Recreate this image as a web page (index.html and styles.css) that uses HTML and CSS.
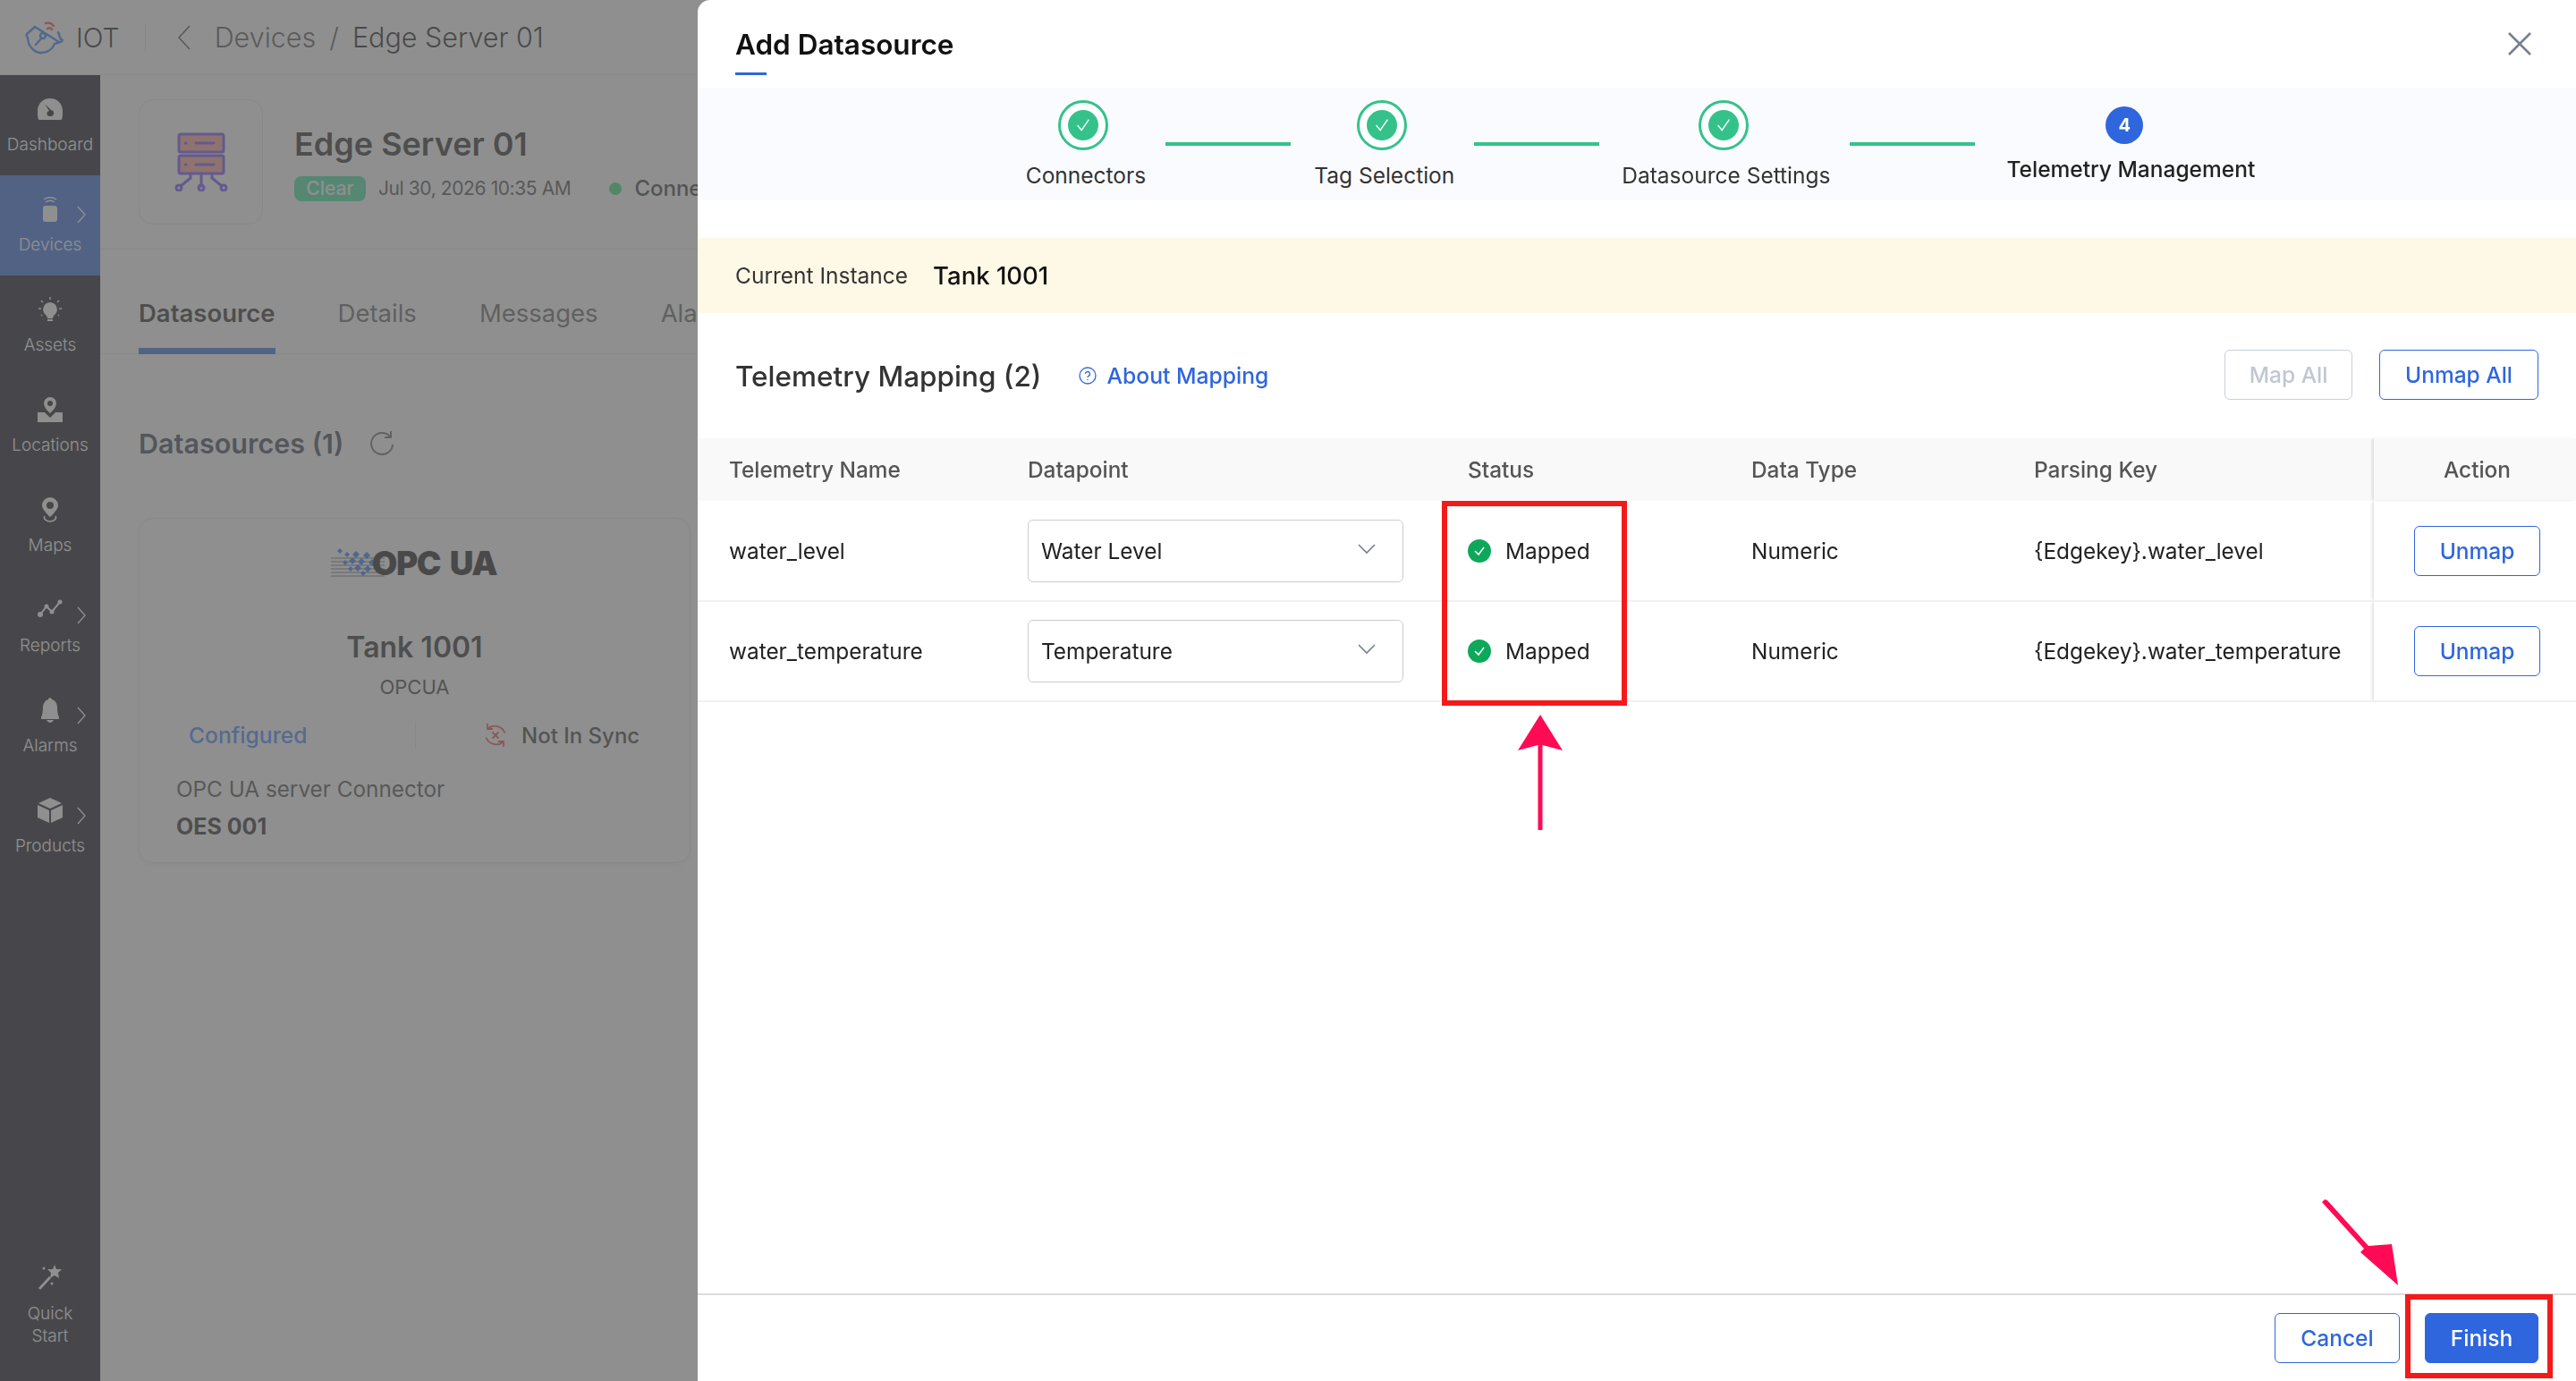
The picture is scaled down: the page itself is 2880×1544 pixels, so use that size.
FILE: index.html
```html
<!DOCTYPE html>
<html lang="en">
<head>
  <meta charset="UTF-8">
  <title>Add Datasource - IOT</title>
  <link rel="stylesheet" href="styles.css">
</head>
<body>

  <header class="topbar">
    <svg class="logo" viewBox="0 0 44 38" fill="none" stroke-width="2.4" stroke-linecap="round">
      <path d="M23 3c4-1 7 0 9 3M25 9c2-1 4-1 5 1" stroke="#ff4040"/>
      <path d="M11 7 2 15c-1 2 0 3 1 4 0 9 7 17 15 17 8 0 13-5 15-10l7-2c2-1 2-3 0-3l-3-8M11 7l27 17M18 20l-6 7" stroke="#2a7ff5"/>
      <circle cx="20" cy="17" r="3" stroke="#2a7ff5"/>
    </svg>
    <span class="brand">IOT</span>
    <span class="topbar-sep"></span>
    <svg class="back" viewBox="0 0 14 28" fill="none" stroke="#444" stroke-width="1.6"><path d="M13 1 1 14l12 13"/></svg>
    <span class="crumb">Devices</span>
    <span class="crumb slash">/</span>
    <span class="crumb current">Edge Server 01</span>
  </header>

  <div class="layout">
    <nav class="sidebar">
      <div class="nav-item">
        <svg viewBox="0 0 28 24" fill="currentColor"><path d="M14 0C6 0 0 6 0 14c0 4 0 10 2 10h24c2 0 2-6 2-10C28 6 22 0 14 0Zm0 20a3 3 0 0 1-1-6L8 6l7 7a3 3 0 0 1-1 7Z"/></svg>
        <span>Dashboard</span>
      </div>
      <div class="nav-item active">
        <svg viewBox="0 0 28 28" fill="currentColor"><rect x="6" y="10" width="16" height="18" rx="3"/><path d="M9 6c3-2 7-2 10 0M7 3c4-3 10-3 14 0" fill="none" stroke="currentColor" stroke-width="1.5"/></svg>
        <span>Devices</span>
        <svg class="nav-arrow" viewBox="0 0 10 20" fill="none" stroke="currentColor" stroke-width="1.3"><path d="m1 1 8 9-8 9"/></svg>
      </div>
      <div class="nav-item">
        <svg viewBox="0 0 28 28" fill="currentColor"><path d="M14 6a8 8 0 0 0-5 14c1 1 2 2 2 4h6c0-2 1-3 2-4a8 8 0 0 0-5-14Z"/><rect x="11" y="25" width="6" height="2"/><path d="M14 0v3M4 4l2 2M24 4l-2 2M1 13h3M24 13h3M4 21l1-1M24 21l-1-1" fill="none" stroke="currentColor" stroke-width="1.5"/></svg>
        <span>Assets</span>
      </div>
      <div class="nav-item">
        <svg viewBox="0 0 28 28" fill="currentColor"><path d="M14 0a7 7 0 0 0-7 7c0 5 7 11 7 11s7-6 7-11a7 7 0 0 0-7-7Zm0 10a3 3 0 1 1 0-6 3 3 0 0 1 0 6Z"/><path d="M0 17v11h28V17l-8 0-6 6-6-6Z"/></svg>
        <span>Locations</span>
      </div>
      <div class="nav-item">
        <svg viewBox="0 0 28 28" fill="currentColor"><path d="M14 0a9 9 0 0 0-9 9c0 5 9 13 9 13s9-8 9-13a9 9 0 0 0-9-9Zm0 13a4 4 0 1 1 0-8 4 4 0 0 1 0 8Z"/><path d="M8 21c-2 3 2 6 6 6s8-3 6-6" fill="none" stroke="currentColor" stroke-width="1.6"/></svg>
        <span>Maps</span>
      </div>
      <div class="nav-item">
        <svg viewBox="0 0 28 28" fill="none" stroke="currentColor" stroke-width="2"><path d="m3 19 7-9 6 6 9-11"/><g fill="currentColor" stroke="none"><circle cx="3" cy="19" r="3"/><circle cx="10" cy="10" r="2.5"/><circle cx="16" cy="16" r="2.5"/><circle cx="25" cy="5" r="2.5"/></g></svg>
        <span>Reports</span>
        <svg class="nav-arrow" viewBox="0 0 10 20" fill="none" stroke="currentColor" stroke-width="1.3"><path d="m1 1 8 9-8 9"/></svg>
      </div>
      <div class="nav-item">
        <svg viewBox="0 0 28 28" fill="currentColor"><path d="M14 0c-1 0-2 1-2 2-4 1-6 5-6 9 0 5-1 9-2 11v2h20v-2c-1-2-2-6-2-11 0-4-2-8-6-9 0-1-1-2-2-2ZM10 25c1 2 3 3 4 3s3-1 4-3Z"/></svg>
        <span>Alarms</span>
        <svg class="nav-arrow" viewBox="0 0 10 20" fill="none" stroke="currentColor" stroke-width="1.3"><path d="m1 1 8 9-8 9"/></svg>
      </div>
      <div class="nav-item">
        <svg viewBox="0 0 28 28" fill="currentColor"><path d="M14 0 1 6l13 6 13-6ZM0 8v14l13 6V14ZM28 8v14l-13 6V14Z"/></svg>
        <span>Products</span>
        <svg class="nav-arrow" viewBox="0 0 10 20" fill="none" stroke="currentColor" stroke-width="1.3"><path d="m1 1 8 9-8 9"/></svg>
      </div>
      <div class="nav-item quick">
        <svg viewBox="0 0 28 28" fill="currentColor"><path d="m19 0 2 5 6 0-4 4 1 6-5-3-5 3 1-6-4-4 6 0Z"/><path d="M13 13 1 26l2 2 12-13Z"/><circle cx="7" cy="4" r="1.5"/><circle cx="16" cy="21" r="1.5"/></svg>
        <span>Quick<br>Start</span>
      </div>
    </nav>

    <main class="content">
      <section class="device-head">
        <div class="device-icon">
          <svg viewBox="0 0 60 66" fill="none" stroke="#6b48ff" stroke-width="3" stroke-linecap="round">
            <rect x="5" y="2" width="50" height="20" rx="2" fill="#ffa090"/>
            <rect x="5" y="26" width="50" height="20" rx="2" fill="#ffa090"/>
            <path d="M12 12h1M24 12h20M12 36h1M24 36h20M30 46v14M18 46v5l-11 9M42 46v5l11 9"/>
            <circle cx="5" cy="62" r="3"/><circle cx="30" cy="62" r="3"/><circle cx="55" cy="62" r="3"/>
          </svg>
        </div>
        <div>
          <h1 class="device-name">Edge Server 01</h1>
          <div class="device-meta">
            <span class="badge-clear">Clear</span>
            <span class="device-date">Jul 30, 2026 10:35 AM</span>
            <span class="dot"></span>
            <span class="device-conn">Connected</span>
          </div>
        </div>
      </section>

      <div class="tabs">
        <span class="tab active">Datasource</span>
        <span class="tab">Details</span>
        <span class="tab">Messages</span>
        <span class="tab">Alarms</span>
      </div>

      <div class="ds-head">
        <h2>Datasources (1)</h2>
        <svg viewBox="0 0 28 28" fill="none" stroke="#5d6470" stroke-width="2"><path d="M23 7a12 12 0 1 0 3 9"/><path d="M24 1v7h-7"/></svg>
      </div>

      <div class="ds-card">
        <div class="opc-logo">
          <svg viewBox="0 0 70 32" fill="#1f78ff">
            <g stroke="#666" stroke-width="1"><path d="M0 11h60M0 15h60M0 19h60M0 23h60M0 27h60M0 31h60"/></g>
            <path d="m10 0 3 3-3 3-3-3ZM18 4l3 3-3 3-3-3ZM28 3l4 4-4 4-4-4ZM40 4l4 4-4 4-4-4ZM24 10l4 4-4 4-4-4ZM34 11l4 4-4 4-4-4ZM46 12l4 4-4 4-4-4ZM16 13l3 3-3 3-3-3ZM30 18l4 4-4 4-4-4ZM41 19l4 4-4 4-4-4ZM22 20l3 3-3 3-3-3ZM36 25l3 3-3 3-3-3Z"/>
          </svg>
          <span>OPC UA</span>
        </div>
        <div class="ds-title">Tank 1001</div>
        <div class="ds-type">OPCUA</div>
        <div class="ds-status">
          <span class="configured">Configured</span>
          <span class="sync">
            <svg viewBox="0 0 28 28" fill="none" stroke="#f04040" stroke-width="1.8"><path d="M5.500 6.500a12 12 0 0 1 19 5M22.500 21.500a12 12 0 0 1-19-5M5 1v6h6M23 27v-6h-6M10.500 10.500l7 7M17.500 10.500l-7 7"/></svg>
            Not In Sync
          </span>
        </div>
        <div class="ds-conn">OPC UA server Connector</div>
        <div class="ds-code">OES 001</div>
      </div>
    </main>
  </div>

  <div class="backdrop"></div>

  <aside class="panel">
    <div class="panel-head">
      <div class="panel-title">Add Datasource</div>
      <svg class="close" viewBox="0 0 26 26" fill="none" stroke="#76808f" stroke-width="2.6"><path d="m1 1 24 24M25 1 1 25"/></svg>
    </div>

    <div class="stepper">
      <div class="step first">
        <span class="ring"><svg viewBox="0 0 24 24" fill="none" stroke="#fff" stroke-width="1.5"><path d="m5 12 5 6 9-13"/></svg></span>
        <span class="step-label">Connectors</span>
      </div>
      <span class="step-line"></span>
      <div class="step">
        <span class="ring"><svg viewBox="0 0 24 24" fill="none" stroke="#fff" stroke-width="1.5"><path d="m5 12 5 6 9-13"/></svg></span>
        <span class="step-label">Tag Selection</span>
      </div>
      <span class="step-line second"></span>
      <div class="step">
        <span class="ring"><svg viewBox="0 0 24 24" fill="none" stroke="#fff" stroke-width="1.5"><path d="m5 12 5 6 9-13"/></svg></span>
        <span class="step-label">Datasource Settings</span>
      </div>
      <span class="step-line last"></span>
      <div class="step current">
        <span class="num">4</span>
        <span class="step-label">Telemetry Management</span>
      </div>
    </div>

    <div class="instance">
      <span class="instance-label">Current Instance</span>
      <span class="instance-name">Tank 1001</span>
    </div>

    <div class="map-head">
      <h2>Telemetry Mapping (2)</h2>
      <a class="about">
        <svg viewBox="0 0 20 20" fill="none" stroke="#2f66dd" stroke-width="1.3"><circle cx="10" cy="10" r="9"/><path d="M7.500 8a2.500 2.500 0 1 1 3.500 2.300c-.8.4-1 1-1 1.700M10 14v1.200"/></svg>
        About Mapping
      </a>
      <div class="map-actions">
        <button class="btn disabled">Map All</button>
        <button class="btn">Unmap All</button>
      </div>
    </div>

    <table class="map-table">
      <colgroup>
        <col class="c-name"><col class="c-point"><col class="c-status"><col class="c-type"><col class="c-key"><col class="c-action">
      </colgroup>
      <thead>
        <tr><th>Telemetry Name</th><th>Datapoint</th><th>Status</th><th>Data Type</th><th>Parsing Key</th><th class="action">Action</th></tr>
      </thead>
      <tbody>
        <tr>
          <td>water_level</td>
          <td><div class="select">Water Level<svg viewBox="0 0 20 12" fill="none" stroke="#76808f" stroke-width="1.6"><path d="m1 1 9 9 9-9"/></svg></div></td>
          <td><span class="mapped"><svg viewBox="0 0 26 26"><circle cx="13" cy="13" r="13" fill="#0da85a"/><path d="m8 13 4 4 6-8" fill="none" stroke="#fff" stroke-width="1.6"/></svg>Mapped</span></td>
          <td>Numeric</td>
          <td>{Edgekey}.water_level</td>
          <td class="action"><button class="btn">Unmap</button></td>
        </tr>
        <tr>
          <td>water_temperature</td>
          <td><div class="select">Temperature<svg viewBox="0 0 20 12" fill="none" stroke="#76808f" stroke-width="1.6"><path d="m1 1 9 9 9-9"/></svg></div></td>
          <td><span class="mapped"><svg viewBox="0 0 26 26"><circle cx="13" cy="13" r="13" fill="#0da85a"/><path d="m8 13 4 4 6-8" fill="none" stroke="#fff" stroke-width="1.6"/></svg>Mapped</span></td>
          <td>Numeric</td>
          <td>{Edgekey}.water_temperature</td>
          <td class="action"><button class="btn">Unmap</button></td>
        </tr>
      </tbody>
    </table>

    <div class="panel-foot">
      <button class="btn">Cancel</button>
      <button class="btn primary">Finish</button>
    </div>

    <!-- review markup drawn on top of the screenshot -->
    <div class="mark mark-status"></div>
    <div class="mark mark-finish"></div>
    <svg class="arrow arrow-up" viewBox="0 0 50 130" fill="#ff0a54"><path d="M25 0 50 40 27.500 34V129H22.500V34L0 40Z"/></svg>
    <svg class="arrow arrow-diag" viewBox="0 0 90 100" fill="#ff0a54" stroke="none"><path d="M3 0 0 3 47 55 43 59 85 96 78 50 52 52 6 1Z"/></svg>
  </aside>

</body>
</html>
```

FILE: styles.css
```css
* { box-sizing: border-box; }
html, body {
  height: 100%;
}
body {
  margin: 0;
  overflow: hidden;
  background: #fff;
  color: #111;
  font-family: Inter, 'Noto Sans', sans-serif;
  display: flex;
  flex-direction: column;
}
h1, h2 { margin: 0; }
button { font-family: inherit; }

/* top bar */
.topbar {
  height: 84px;
  flex: none;
  display: flex;
  align-items: center;
  padding-left: 28px;
  border-bottom: 1px solid #e8e8e8;
}
.logo { width: 44px; height: 38px; }
.brand { font-size: 30px; font-weight: 300; margin-left: 13px; color: #111; }
.topbar-sep {
  width: 1px;
  height: 30px;
  background: #ddd;
  margin: 0 36px 0 28px;
}
.back { width: 14px; height: 28px; margin-right: 27px; }
.crumb { font-size: 30.500px; font-weight: 300; color: #4d4d4d; }
.crumb.slash { margin: 0 15px; }
.crumb.current { color: #111; }

/* sidebar */
.layout {
  flex: 1;
  display: flex;
  min-height: 0;
}
.sidebar {
  width: 112px;
  flex: none;
  background: #070a15;
  color: #fff;
  display: flex;
  flex-direction: column;
}
.nav-item {
  position: relative;
  height: 112px;
  flex: none;
  display: flex;
  flex-direction: column;
  align-items: center;
  padding-top: 24px;
  font-size: 19px;
  font-weight: 300;
  text-align: center;
}
.nav-item svg:first-child {
  width: 28px;
  height: 28px;
  margin-bottom: 14px;
}
.nav-item.active { background: #2f66dd; }
.nav-arrow {
  position: absolute;
  left: 86px;
  top: 34px;
  width: 10px;
  height: 20px;
}
.nav-item.quick {
  margin-top: auto;
  height: 130px;
  line-height: 25px;
  padding-top: 0;
}

/* device page behind the panel */
.content {
  flex: 1;
  min-width: 0;
  padding: 0 0 0 43px;
  overflow: hidden;
}
.device-head {
  display: flex;
  align-items: center;
  gap: 35px;
  height: 195px;
  margin-left: -43px;
  padding-left: 43px;
  border-bottom: 1px solid #e8e8e8;
}
.device-icon {
  width: 139px;
  height: 140px;
  border: 1px solid #e4e6ea;
  border-radius: 16px;
  display: flex;
  align-items: center;
  justify-content: center;
}
.device-icon svg { width: 60px; height: 66px; }
.device-name { font-size: 36px; font-weight: 600; color: #222; padding-top: 2px; }
.device-meta {
  display: flex;
  align-items: center;
  margin-top: 13px;
  font-size: 21px;
  white-space: nowrap;
}
.badge-clear {
  background: #37e39f;
  color: #fff;
  width: 80px;
  height: 28px;
  border-radius: 8px;
  text-align: center;
  line-height: 28px;
  font-weight: 500;
}
.device-date { margin-left: 14px; color: #444; letter-spacing: -.4px; }
.dot {
  width: 14px;
  height: 14px;
  border-radius: 50%;
  background: #2fe07a;
  margin: 0 14px 0 43px;
}
.device-conn { font-size: 24px; font-weight: 500; color: #333; }
.tabs {
  display: flex;
  gap: 70px;
  height: 117px;
  margin-left: -43px;
  padding-left: 43px;
  border-bottom: 1px solid #e8e8e8;
  white-space: nowrap;
}
.tab {
  font-size: 27.500px;
  color: #5d5d5d;
  padding-top: 54px;
}
.tab.active {
  color: #222;
  font-weight: 600;
  border-bottom: 7px solid #2f66dd;
  height: 117px;
}
.ds-head {
  display: flex;
  align-items: center;
  gap: 29px;
  margin-top: 79px;
  height: 40px;
}
.ds-head h2 { font-size: 30.500px; font-weight: 600; color: #333c4c; }
.ds-head svg { width: 28px; height: 28px; }
.ds-card {
  width: 617px;
  height: 386px;
  margin-top: 64px;
  border: 1px solid #e4e6ea;
  border-radius: 16px;
  box-shadow: 0 2px 6px rgba(0,0,0,.06);
  padding: 33px 42px 0;
}
.opc-logo {
  display: flex;
  align-items: center;
  justify-content: center;
  height: 32px;
  margin-left: -2px;
}
.opc-logo svg { width: 70px; height: 32px; margin-right: -24px; }
.opc-logo span {
  font-size: 37px;
  font-weight: 900;
  letter-spacing: -1.500px;
  word-spacing: 5px;
  color: #111;
}
.ds-title { text-align: center; font-size: 32px; font-weight: 600; color: #222; margin-top: 59px; }
.ds-type { text-align: center; font-size: 22px; color: #333; margin-top: 12px; }
.ds-status {
  display: flex;
  margin: 26px 0 0;
  font-size: 24.700px;
  height: 30px;
  align-items: center;
  white-space: nowrap;
}
.configured {
  width: 266px;
  padding-left: 13px;
  color: #3b80ff;
  font-weight: 500;
}
.sync {
  display: flex;
  align-items: center;
  gap: 15px;
  padding-left: 75px;
  border-left: 1px solid #e4e6ea;
  height: 30px;
  color: #333;
  font-size: 24px;
  font-weight: 500;
}
.sync svg { width: 28px; height: 28px; }
.ds-conn { font-size: 24.300px; color: #444; margin-top: 30px; margin-left: -1px; }
.ds-code { font-size: 25px; font-weight: 700; color: #222; margin-top: 12px; margin-left: -1px; }

.backdrop {
  position: fixed;
  inset: 0;
  background: rgba(97,97,97,.71);
}

/* panel */
.panel {
  position: fixed;
  top: 0;
  right: 0;
  bottom: 0;
  width: 2100px;
  background: #fff;
  border-radius: 14px 0 0 0;
  display: flex;
  flex-direction: column;
  color: #222;
}
.panel-head {
  height: 98px;
  flex: none;
  padding: 0 50px 0 42px;
  display: flex;
  align-items: flex-start;
  justify-content: space-between;
}
.panel-title {
  font-size: 31.500px;
  font-weight: 600;
  color: #111;
  padding-top: 30px;
  height: 84px;
  position: relative;
}
.panel-title::after {
  content: "";
  position: absolute;
  left: 0;
  bottom: 0;
  width: 35px;
  height: 3px;
  background: #2f66dd;
}
.close { width: 26px; height: 26px; margin-top: 36px; }

.stepper {
  height: 126px;
  flex: none;
  background: #fafbfe;
  display: flex;
  justify-content: center;
  padding-top: 14px;
  padding-left: 8px;
}
.step {
  display: flex;
  flex-direction: column;
  align-items: center;
}
.ring {
  width: 56px;
  height: 56px;
  border-radius: 50%;
  border: 3px solid #34c28a;
  background: #fff;
  margin-right: 6px;
  display: flex;
  align-items: center;
  justify-content: center;
  flex: none;
}
.ring svg {
  width: 34px;
  height: 34px;
  padding: 6px;
  border-radius: 50%;
  background: #34c28a;
}
.num {
  width: 42px;
  height: 42px;
  margin: 7px 14px 0 0;
  border-radius: 50%;
  background: #2f66dd;
  color: #fff;
  font-size: 20px;
  font-weight: 700;
  line-height: 42px;
  text-align: center;
  flex: none;
}
.step-label {
  font-size: 24.500px;
  color: #333;
  margin-top: 13px;
  white-space: nowrap;
}
.step.current .step-label {
  font-weight: 500;
  color: #222;
}
.step-line {
  width: 140px;
  height: 4px;
  background: #34c28a;
  margin: 47px 26px 0 22px;
}
.step-line.second { margin-right: 25px; }
.step-line.last { margin-right: 35px; }

.instance {
  height: 84px;
  flex: none;
  margin-top: 42px;
  background: #fef8e6;
  padding-left: 42px;
  display: flex;
  align-items: center;
  gap: 28px;
}
.instance-label { font-size: 24.500px; color: #333; }
.instance-name { font-size: 27.500px; font-weight: 500; color: #111; }

.map-head {
  height: 140px;
  flex: none;
  display: flex;
  align-items: center;
  padding: 0 42px;
}
.map-head h2 { font-size: 31.500px; font-weight: 500; color: #333; }
.about {
  display: flex;
  align-items: center;
  gap: 11px;
  margin-left: 42px;
  font-size: 24.700px;
  font-weight: 500;
  color: #2f66dd;
}
.about svg { width: 20px; height: 20px; }
.map-actions {
  margin-left: auto;
  display: flex;
  gap: 30px;
  margin-top: -2px;
}
.btn {
  height: 56px;
  padding: 0 28px;
  border: 1px solid #2f66dd;
  border-radius: 6px;
  background: #fff;
  color: #2f66dd;
  font-size: 24.500px;
  font-weight: 500;
}
.btn.disabled {
  width: 143px;
  padding: 0;
  border-color: #c9d0da;
  color: #c0c7d2;
}
.btn.primary {
  background: #2f66dd;
  color: #fff;
  width: 127px;
  padding: 0;
}

.map-table {
  width: 2100px;
  table-layout: fixed;
  border-collapse: collapse;
  font-size: 24.400px;
  flex: none;
}
.c-name { width: 334px; }
.c-point { width: 492px; }
.c-status { width: 317px; }
.c-type { width: 316px; }
.c-key { width: 415px; }
.c-action { width: 226px; }
.map-table th {
  height: 70px;
  padding: 0 0 0 35px;
  background: #f9f9f9;
  text-align: left;
  font-weight: 500;
  color: #555;
}
.map-table td {
  height: 112px;
  padding: 0 0 0 35px;
  border-bottom: 2px solid #f0f1f4;
  color: #222;
  white-space: nowrap;
}
.map-table .action {
  text-align: center;
  padding: 0 0 0 5px;
  box-shadow: -3px 0 3px -1px rgba(0,0,0,.12);
}
.action .btn { width: 141px; padding: 0; }
.select {
  width: 420px;
  height: 70px;
  border: 1px solid #c9ccd2;
  border-radius: 6px;
  padding: 0 30px 0 14px;
  display: flex;
  align-items: center;
  justify-content: space-between;
}
.select svg { width: 20px; height: 12px; margin-top: -4px; }
.mapped {
  display: flex;
  align-items: center;
  gap: 16px;
}
.mapped svg { width: 26px; height: 26px; }

.panel-foot {
  margin-top: auto;
  height: 98px;
  flex: none;
  border-top: 2px solid #ddd;
  display: flex;
  justify-content: flex-end;
  align-items: center;
  gap: 28px;
  padding: 0 42px 0 0;
}
.panel-foot .btn:first-child { width: 140px; padding: 0; }

/* annotations, offsets are relative to the panel */
.mark {
  position: absolute;
  border: 6px solid #f41a1a;
}
.mark-status { left: 832px; top: 560px; width: 207px; height: 229px; }
.mark-finish { left: 1909px; top: 1447px; width: 165px; height: 94px; }
.arrow { position: absolute; }
.arrow-up { left: 917px; top: 799px; width: 50px; height: 130px; }
.arrow-diag { left: 1816px; top: 1341px; width: 90px; height: 100px; }
```
